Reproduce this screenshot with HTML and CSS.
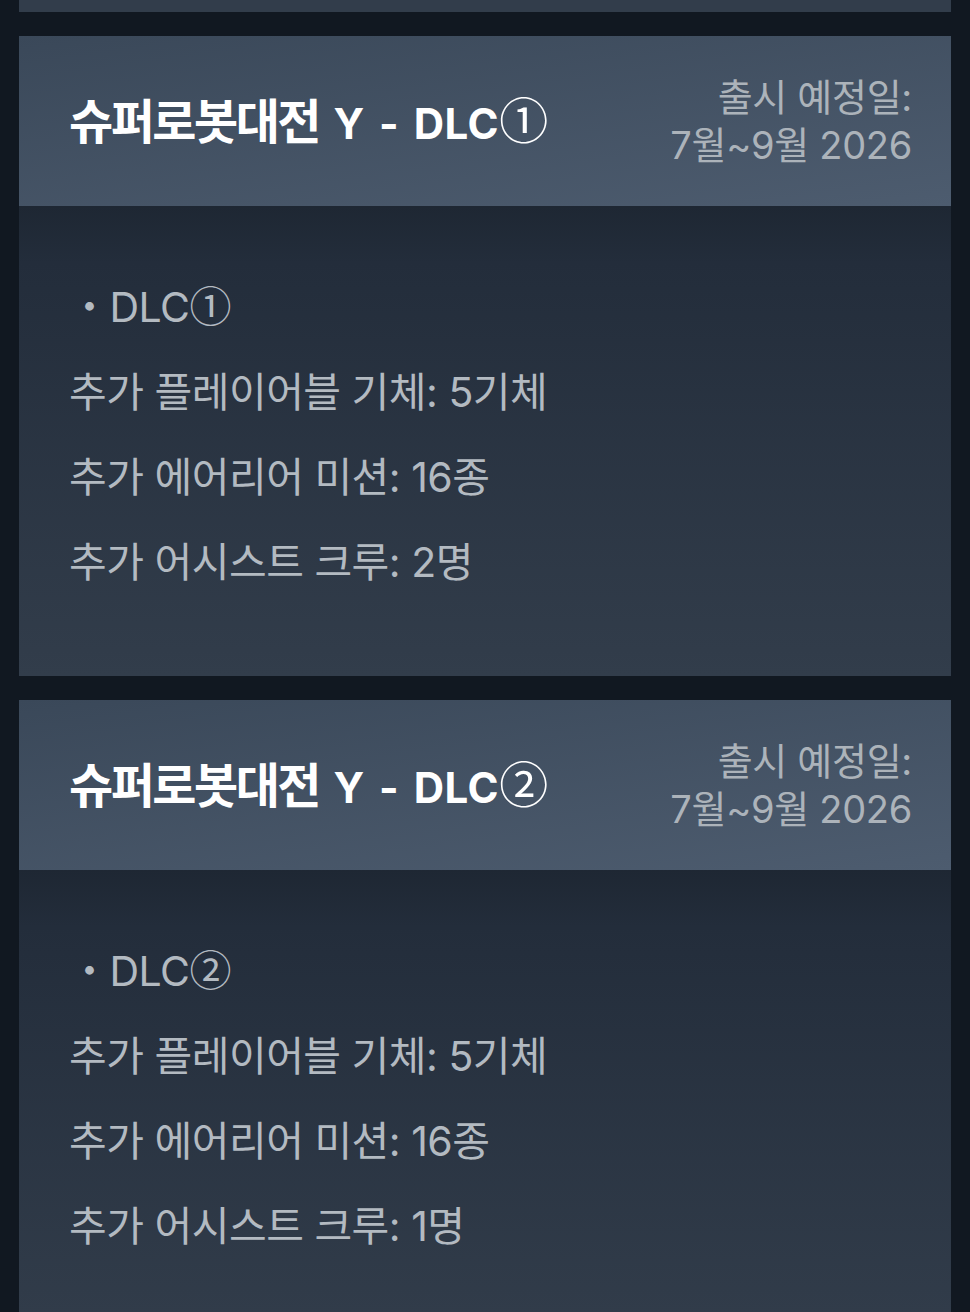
FILE: index.html
```html
<!DOCTYPE html>
<html lang="ko">
<head>
<meta charset="utf-8">
<link rel="stylesheet" href="styles.css">
</head>
<body>
<div class="list">
  <div class="card card-prev"><div class="card-body-end"></div></div>

  <section class="card">
    <header class="card-head">
      <h2 class="title"><span class="ko">슈퍼로봇대전</span> Y - DLC<span class="circ">①</span></h2>
      <div class="date">
        <div>출시 예정일:</div>
        <div>7월~9월 2026</div>
      </div>
    </header>
    <div class="card-body">
      <p class="line">・DLC<span class="circ">①</span></p>
      <p class="line">추가 플레이어블 기체: 5기체</p>
      <p class="line">추가 에어리어 미션: 16종</p>
      <p class="line">추가 어시스트 크루: 2명</p>
    </div>
  </section>

  <section class="card">
    <header class="card-head">
      <h2 class="title"><span class="ko">슈퍼로봇대전</span> Y - DLC<span class="circ">②</span></h2>
      <div class="date">
        <div>출시 예정일:</div>
        <div>7월~9월 2026</div>
      </div>
    </header>
    <div class="card-body">
      <p class="line">・DLC<span class="circ">②</span></p>
      <p class="line">추가 플레이어블 기체: 5기체</p>
      <p class="line">추가 에어리어 미션: 16종</p>
      <p class="line">추가 어시스트 크루: 1명</p>
    </div>
  </section>
</div>
</body>
</html>
```

FILE: styles.css
```css
html, body {
  margin: 0;
  padding: 0;
  background: #111821;
}

body {
  font-family: "Inter", "Noto Sans CJK KR", sans-serif;
  height: 1312px;
  overflow: hidden;
}

.list {
  display: flex;
  flex-direction: column;
  gap: 24px;
  padding: 0 19px;
}

.card {
  display: flex;
  flex-direction: column;
}

.card-body-end {
  height: 12px;
  background: #323d4b;
}

.card-head {
  height: 170px;
  box-sizing: border-box;
  padding: 0 39px 0 50px;
  display: flex;
  align-items: center;
  justify-content: space-between;
  background: linear-gradient(172deg, #3a4859 0%, #4d5c6f 100%);
}

.title {
  margin: 0;
  font-size: 42px;
  line-height: 60px;
  font-weight: 700;
  color: #ffffff;
  letter-spacing: 0.5px;
  word-spacing: 4px;
  white-space: nowrap;
}

.title .ko {
  font-size: 48px;
  letter-spacing: -2.5px;
}

.circ {
  font-family: "Noto Sans CJK KR", sans-serif;
  font-weight: 400;
  letter-spacing: 0;
}

.title .circ {
  font-size: 49px;
}

.date {
  text-align: right;
  font-size: 38px;
  line-height: 48px;
  letter-spacing: -0.3px;
  color: #acb3ba;
}

.card-body {
  height: 470px;
  box-sizing: border-box;
  padding: 55px 50px 0 50px;
  background: linear-gradient(to bottom, #1e2733 0%, #232d3b 12%, #323d4b 100%);
}

.line {
  margin: 0;
  font-size: 41px;
  line-height: 85px;
  letter-spacing: -0.5px;
  color: #b3bac1;
}

.line .circ {
  font-size: 42px;
}
```
